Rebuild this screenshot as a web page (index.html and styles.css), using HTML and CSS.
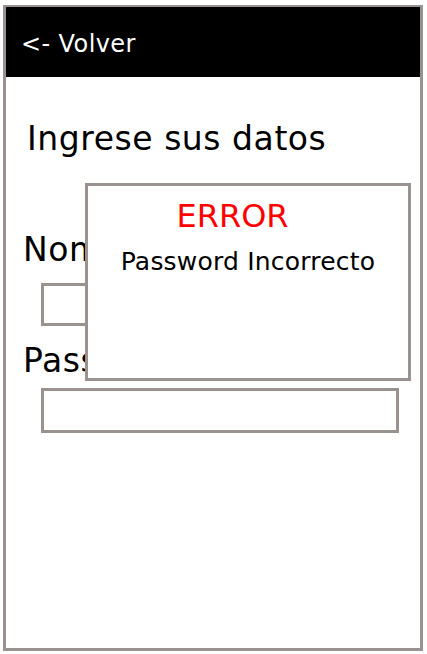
FILE: index.html
```html
<!DOCTYPE html>
<html lang="es">
<head>
    <meta charset="UTF-8">
    <meta name="viewport" content="width=device-width, initial-scale=1.0">
    <title>Ingreso</title>
    <link rel="stylesheet" href="styles.css">
</head>
<body>
    <div class="phone">
        <div class="topbar">&lt;- Volver</div>
        <div class="form">
            <h1 class="title">Ingrese sus datos</h1>
            <label class="label">Nombre</label>
            <div class="field"></div>
            <label class="label label-pass">Password</label>
            <div class="field field-pass"></div>
        </div>

        <!-- mensaje de error encima del formulario -->
        <div class="dialog">
            <div class="dialog-title">ERROR</div>
            <div class="dialog-text">Password Incorrecto</div>
        </div>
    </div>
</body>
</html>
```

FILE: styles.css
```css
body {
    margin: 0;
    font-family: "DejaVu Sans", Verdana, sans-serif;
    background: #fff;
}
.phone {
    position: relative;
    box-sizing: border-box;
    width: 420px;
    height: 646px;
    margin: 5px 0 0 3px;
    border: 3px solid #99928e;
    border-top-width: 2px;
}
.topbar {
    box-sizing: border-box;
    height: 70px;
    background: #000;
    color: #fff;
    font-size: 24px;
    line-height: 28px;
    letter-spacing: 0.4px;
    padding: 23px 0 0 15px;
}
.form {
    padding-left: 17px;
}
.title {
    margin: 43px 0 0 4px;
    font-size: 33px;
    font-weight: normal;
    line-height: 38px;
    letter-spacing: 0.55px;
}
.label {
    display: block;
    margin-top: 73px;
    font-size: 33px;
    line-height: 38px;
    letter-spacing: 0.55px;
}
.label-pass {
    margin-top: 16px;
}
.field {
    box-sizing: border-box;
    width: 358px;
    height: 43px;
    margin: 14px 0 0 18px;
    border: 3px solid #99928e;
}
.field-pass {
    height: 45px;
    margin-top: 8px;
}
.dialog {
    position: absolute;
    left: 79px;
    top: 176px;
    box-sizing: border-box;
    width: 326px;
    height: 198px;
    background: #fff;
    border: 3px solid #99928e;
    text-align: center;
}
.dialog-title {
    margin-top: 12px;
    padding-right: 31px;
    color: #ff0000;
    font-size: 32px;
    line-height: 36px;
}
.dialog-text {
    margin-top: 13px;
    font-size: 25px;
    line-height: 30px;
    letter-spacing: 0.2px;
}
```
